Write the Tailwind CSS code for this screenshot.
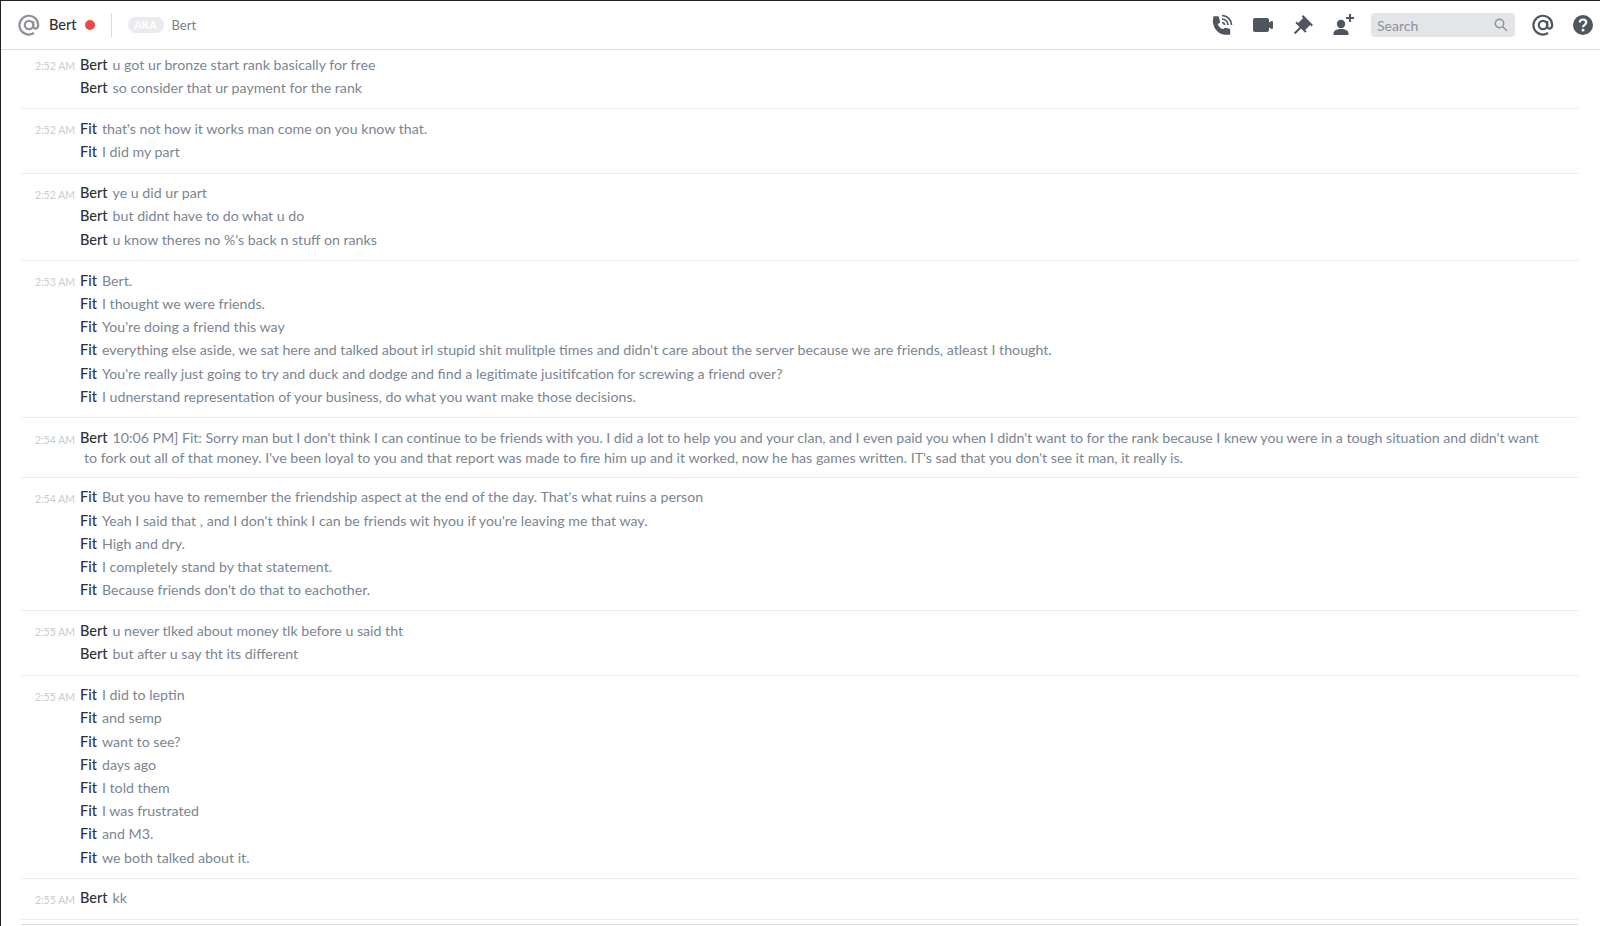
<!DOCTYPE html>
<html lang="en">

<head>
    <meta charset="utf-8">
    <title>Bert</title>
    <script src="https://cdn.jsdelivr.net/npm/@tailwindcss/browser@4"></script>
</head>

<body class="h-[926px] overflow-hidden bg-white font-['Lato',sans-serif] text-[14.2px] text-[#7b8592] border-t border-l border-[#202225]">
    <!-- Top bar -->
    <header class="flex h-[49px] items-center border-b border-[#d9dadc] pl-[16px] pr-[5px]">
        <svg class="h-[24px] w-[24px] text-[#8e9297]" viewBox="0 0 24 24" fill="none" stroke="currentColor" stroke-width="2.2">
            <circle cx="12" cy="12" r="4.2"></circle>
            <path d="M16.2 8v5c0 3.6 5 3.6 5-1.2A9.4 9.4 0 1 0 17 20"></path>
        </svg>
        <span class="ml-[8px] text-[14.5px] font-medium text-[#2e3136]">Bert</span>
        <span class="ml-[8px] h-[10px] w-[10px] rounded-full bg-[#f04747]"></span>
        <span class="ml-[16px] h-[24px] w-px bg-[#d9dadc]"></span>
        <span class="ml-[16px] flex h-[16px] w-[36px] items-center justify-center rounded-full bg-[#eaebed] text-[11px] font-bold text-white">AKA</span>
        <span class="ml-[8px] pt-[1px] text-[13px] text-[#737f8d]">Bert</span>

        <div class="ml-auto flex items-center text-[#4f5660]">
            <svg class="h-[24px] w-[24px]" viewBox="0 0 24 24" fill="currentColor">
                <path d="M4 4h4l1.500 5-2.500 2c1 3 3 5 6 6l2-1.500 4.500 1V21h-4C9 21 4 15 3.500 9z" stroke="currentColor" stroke-width="1.400" stroke-linejoin="round"></path>
                <path d="M12 2.500a9.500 9.500 0 0 1 9.500 9.500M12 6a6 6 0 0 1 6 6M12 9.500a2.500 2.500 0 0 1 2.500 2.500" fill="none" stroke="currentColor" stroke-width="1.700"></path>
            </svg>
            <svg class="ml-[17px] h-[24px] w-[24px]" viewBox="0 0 24 24" fill="currentColor">
                <path d="M21.526 8.149C21.231 7.966 20.862 7.951 20.553 8.105L18 9.382V7C18 5.897 17.103 5 16 5H4C2.897 5 2 5.897 2 7V17C2 18.104 2.897 19 4 19H16C17.103 19 18 18.104 18 17V14.618L20.553 15.894C20.694 15.965 20.847 16 21 16C21.183 16 21.365 15.949 21.526 15.851C21.82 15.668 22 15.347 22 15V9C22 8.653 21.82 8.332 21.526 8.149Z"></path>
            </svg>
            <svg class="ml-[16px] h-[24px] w-[24px]" viewBox="0 0 24 24" fill="currentColor">
                <path d="M22 12L12.101 2.10101L10.686 3.51401L12.101 4.92901L7.15096 9.87801V9.88001L5.73596 8.46501L4.32196 9.88001L8.56496 14.122L2.90796 19.778L4.32196 21.192L9.97896 15.536L14.222 19.778L15.636 18.364L14.222 16.95L19.171 12H19.172L20.586 13.414L22 12Z"></path>
            </svg>
            <svg class="ml-[16px] h-[24px] w-[24px]" viewBox="0 0 24 24" fill="currentColor">
                <circle cx="10" cy="11" r="4.200"></circle>
                <path d="M2.500 22v-1.500c0-3 3-4.500 7.500-4.500s7.500 1.500 7.500 4.500V22z"></path>
                <path d="M18 1v3h-3v2h3v3h2V6h3V4h-3V1z"></path>
            </svg>
            <div class="ml-[16px] flex h-[24px] w-[144px] items-center justify-between rounded-[4px] bg-[#e3e5e8] pl-[6px] pr-[7px] text-[14px] text-[#8e9297]">
                <span>Search</span>
                <svg class="h-[14px] w-[14px]" viewBox="0 0 14 14" fill="none" stroke="currentColor" stroke-width="1.400">
                    <circle cx="5.500" cy="5.500" r="4.200"></circle>
                    <path d="M8.700 8.700 13 13"></path>
                </svg>
            </div>
            <svg class="ml-[16px] h-[24px] w-[24px]" viewBox="0 0 24 24" fill="none" stroke="currentColor" stroke-width="2.200">
                <circle cx="12" cy="12" r="4.200"></circle>
                <path d="M16.200 8v5c0 3.600 5 3.600 5-1.200A9.400 9.400 0 1 0 17 20"></path>
            </svg>
            <svg class="ml-[16px] h-[24px] w-[24px]" viewBox="0 0 24 24" fill="none">
                <circle cx="12" cy="12" r="10" fill="currentColor"></circle>
                <path d="M8.800 9.500C8.800 7.500 10.200 6.500 12 6.500s3.200 1.100 3.200 2.800c0 2.600-3.200 2.500-3.200 5" stroke="white" stroke-width="2.200"></path>
                <circle cx="12" cy="17.200" r="1.400" fill="white"></circle>
            </svg>
        </div>
    </header>

    <!-- Messages -->
    <main class="ml-[20px] mr-[22px]">
        <section class="flex border-b border-[#ececed] pt-[3.500px] pb-[8.500px]">
            <time class="w-[59px] shrink-0 whitespace-nowrap pt-[4.500px] pr-[5px] text-right text-[10.5px] leading-[16px] text-[#c8ccd1]">2:52 AM</time>
            <div>
                <p class="h-[23.200px] leading-[21px]"><b class="mr-[5px] text-[14.500px] font-medium text-[#2e3136]">Bert</b>u got ur bronze start rank basically for free</p>
                <p class="h-[23.200px] leading-[21px]"><b class="mr-[5px] text-[14.500px] font-medium text-[#2e3136]">Bert</b>so consider that ur payment for the rank</p>
            </div>
        </section>
        <section class="flex border-b border-[#ececed] pt-[8.500px] pb-[8.500px]">
            <time class="w-[59px] shrink-0 whitespace-nowrap pt-[4.500px] pr-[5px] text-right text-[10.5px] leading-[16px] text-[#c8ccd1]">2:52 AM</time>
            <div>
                <p class="h-[23.200px] leading-[21px]"><b class="mr-[5px] text-[14.500px] font-medium text-[#2e3136]">Fit</b>that's not how it works man come on you know that.</p>
                <p class="h-[23.200px] leading-[21px]"><b class="mr-[5px] text-[14.500px] font-medium text-[#2e3136]">Fit</b>I did my part</p>
            </div>
        </section>
        <section class="flex border-b border-[#ececed] pt-[8.500px] pb-[8.500px]">
            <time class="w-[59px] shrink-0 whitespace-nowrap pt-[4.500px] pr-[5px] text-right text-[10.5px] leading-[16px] text-[#c8ccd1]">2:52 AM</time>
            <div>
                <p class="h-[23.200px] leading-[21px]"><b class="mr-[5px] text-[14.500px] font-medium text-[#2e3136]">Bert</b>ye u did ur part</p>
                <p class="h-[23.200px] leading-[21px]"><b class="mr-[5px] text-[14.500px] font-medium text-[#2e3136]">Bert</b>but didnt have to do what u do</p>
                <p class="h-[23.200px] leading-[21px]"><b class="mr-[5px] text-[14.500px] font-medium text-[#2e3136]">Bert</b>u know theres no %'s back n stuff on ranks</p>
            </div>
        </section>
        <section class="flex border-b border-[#ececed] pt-[8.500px] pb-[8.500px]">
            <time class="w-[59px] shrink-0 whitespace-nowrap pt-[4.500px] pr-[5px] text-right text-[10.5px] leading-[16px] text-[#c8ccd1]">2:53 AM</time>
            <div>
                <p class="h-[23.200px] leading-[21px]"><b class="mr-[5px] text-[14.500px] font-medium text-[#2e3136]">Fit</b>Bert.</p>
                <p class="h-[23.200px] leading-[21px]"><b class="mr-[5px] text-[14.500px] font-medium text-[#2e3136]">Fit</b>I thought we were friends.</p>
                <p class="h-[23.200px] leading-[21px]"><b class="mr-[5px] text-[14.500px] font-medium text-[#2e3136]">Fit</b>You're doing a friend this way</p>
                <p class="h-[23.200px] leading-[21px]"><b class="mr-[5px] text-[14.500px] font-medium text-[#2e3136]">Fit</b>everything else aside, we sat here and talked about irl stupid shit mulitple times and didn't care about the server because we are friends, atleast I thought.</p>
                <p class="h-[23.200px] leading-[21px]"><b class="mr-[5px] text-[14.500px] font-medium text-[#2e3136]">Fit</b>You're really just going to try and duck and dodge and find a legitimate jusitifcation for screwing a friend over?</p>
                <p class="h-[23.200px] leading-[21px]"><b class="mr-[5px] text-[14.500px] font-medium text-[#2e3136]">Fit</b>I udnerstand representation of your business, do what you want make those decisions.</p>
            </div>
        </section>
        <section class="flex border-b border-[#ececed] pt-[9.500px] pb-[8px]">
            <time class="w-[59px] shrink-0 whitespace-nowrap pt-[4px] pr-[5px] text-right text-[10.5px] leading-[16px] text-[#c8ccd1]">2:54 AM</time>
            <p class="pl-[4px] -indent-[4px] leading-[20.500px] whitespace-nowrap"><b class="mr-[5px] text-[14.500px] font-medium text-[#2e3136]">Bert</b><span class="tracking-[-0.04px]">10:06 PM] Fit: Sorry man but I don't think I can continue to be friends with you. I did a lot to help you and your clan, and I even paid you when I didn't want to for the rank because I knew you were in a tough situation and didn't want</span><br>to fork out all of that money. I've been loyal to you and that report was made to fire him up and it worked, now he has games written. IT's sad that you don't see it man, it really is.</p>
        </section>
        <section class="flex border-b border-[#ececed] pt-[8.500px] pb-[8px]">
            <time class="w-[59px] shrink-0 whitespace-nowrap pt-[4.500px] pr-[5px] text-right text-[10.5px] leading-[16px] text-[#c8ccd1]">2:54 AM</time>
            <div>
                <p class="h-[23.200px] leading-[21px]"><b class="mr-[5px] text-[14.500px] font-medium text-[#2e3136]">Fit</b>But you have to remember the friendship aspect at the end of the day. That's what ruins a person</p>
                <p class="h-[23.200px] leading-[21px]"><b class="mr-[5px] text-[14.500px] font-medium text-[#2e3136]">Fit</b>Yeah I said that , and I don't think I can be friends wit hyou if you're leaving me that way.</p>
                <p class="h-[23.200px] leading-[21px]"><b class="mr-[5px] text-[14.500px] font-medium text-[#2e3136]">Fit</b>High and dry.</p>
                <p class="h-[23.200px] leading-[21px]"><b class="mr-[5px] text-[14.500px] font-medium text-[#2e3136]">Fit</b>I completely stand by that statement.</p>
                <p class="h-[23.200px] leading-[21px]"><b class="mr-[5px] text-[14.500px] font-medium text-[#2e3136]">Fit</b>Because friends don't do that to eachother.</p>
            </div>
        </section>
        <section class="flex border-b border-[#ececed] pt-[8.500px] pb-[8.500px]">
            <time class="w-[59px] shrink-0 whitespace-nowrap pt-[4.500px] pr-[5px] text-right text-[10.5px] leading-[16px] text-[#c8ccd1]">2:55 AM</time>
            <div>
                <p class="h-[23.200px] leading-[21px]"><b class="mr-[5px] text-[14.500px] font-medium text-[#2e3136]">Bert</b>u never tlked about money tlk before u said tht</p>
                <p class="h-[23.200px] leading-[21px]"><b class="mr-[5px] text-[14.500px] font-medium text-[#2e3136]">Bert</b>but after u say tht its different</p>
            </div>
        </section>
        <section class="flex border-b border-[#ececed] pt-[8.500px] pb-[8px]">
            <time class="w-[59px] shrink-0 whitespace-nowrap pt-[4.500px] pr-[5px] text-right text-[10.5px] leading-[16px] text-[#c8ccd1]">2:55 AM</time>
            <div>
                <p class="h-[23.200px] leading-[21px]"><b class="mr-[5px] text-[14.500px] font-medium text-[#2e3136]">Fit</b>I did to leptin</p>
                <p class="h-[23.200px] leading-[21px]"><b class="mr-[5px] text-[14.500px] font-medium text-[#2e3136]">Fit</b>and semp</p>
                <p class="h-[23.200px] leading-[21px]"><b class="mr-[5px] text-[14.500px] font-medium text-[#2e3136]">Fit</b>want to see?</p>
                <p class="h-[23.200px] leading-[21px]"><b class="mr-[5px] text-[14.500px] font-medium text-[#2e3136]">Fit</b>days ago</p>
                <p class="h-[23.200px] leading-[21px]"><b class="mr-[5px] text-[14.500px] font-medium text-[#2e3136]">Fit</b>I told them</p>
                <p class="h-[23.200px] leading-[21px]"><b class="mr-[5px] text-[14.500px] font-medium text-[#2e3136]">Fit</b>I was frustrated</p>
                <p class="h-[23.200px] leading-[21px]"><b class="mr-[5px] text-[14.500px] font-medium text-[#2e3136]">Fit</b>and M3.</p>
                <p class="h-[23.200px] leading-[21px]"><b class="mr-[5px] text-[14.500px] font-medium text-[#2e3136]">Fit</b>we both talked about it.</p>
            </div>
        </section>
        <section class="flex border-b border-[#ececed] pt-[8.500px] pb-[8.500px]">
            <time class="w-[59px] shrink-0 whitespace-nowrap pt-[4.500px] pr-[5px] text-right text-[10.5px] leading-[16px] text-[#c8ccd1]">2:55 AM</time>
            <div>
                <p class="h-[23.200px] leading-[21px]"><b class="mr-[5px] text-[14.500px] font-medium text-[#2e3136]">Bert</b>kk</p>
            </div>
        </section>
        <div class="mt-[4px] border-t border-[#dcddde]"></div>
    </main>
</body>

</html>
